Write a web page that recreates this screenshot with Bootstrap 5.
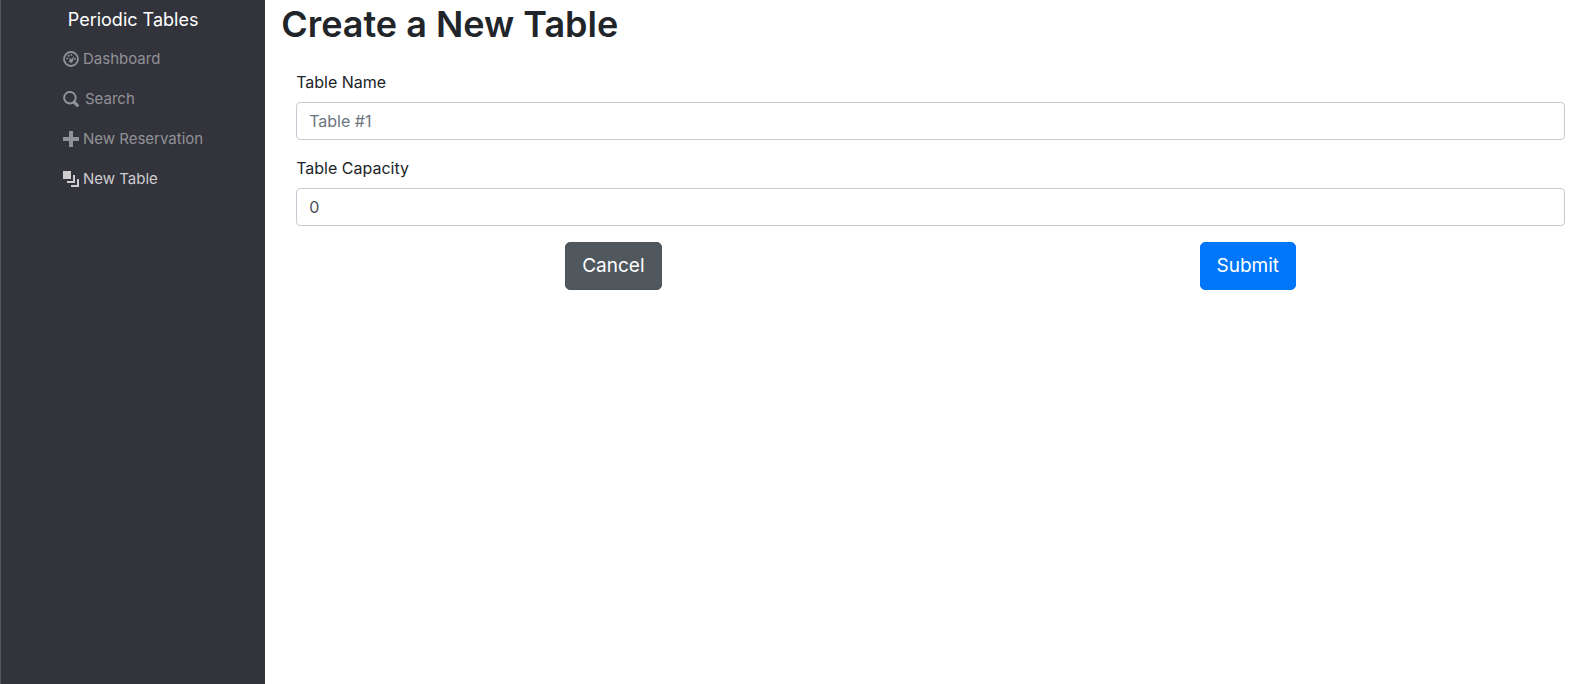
<!DOCTYPE html>
<html lang="en">
<head>
<meta charset="utf-8">
<meta name="viewport" content="width=device-width, initial-scale=1">
<title>Periodic Tables</title>
<link href="https://cdn.jsdelivr.net/npm/bootstrap@5.3.0/dist/css/bootstrap.min.css" rel="stylesheet">
<style>
  body { font-family: Inter, "Liberation Sans", sans-serif; color: #212529; }
  .side { background: #33333c; border-left: 1px solid #55575d; }
  .side .brand-link { font-size: 18px; line-height: 39px; color: #fff; }
  .side .nav-link { display: flex; align-items: center; gap: 4px; padding: 8px 0; font-size: 15px; line-height: 24px; color: #919296; }
  .side .nav-link.active, .side .nav-link:hover { color: #cdcdd0; }
  .side svg { width: 16px; height: 16px; flex: none; }
  .side .nav-link.wide-gap { gap: 6px; }
  .page-title { font-size: 36px; line-height: 48px; font-weight: 600; }
  .table-form { padding: 14px 10px 0 15px; }
  .form-label { line-height: 24px; }
  .form-control { border-color: #c5ccd3; border-radius: 4px; padding: 6px 12px; color: #495057; }
  .form-control::placeholder { color: #6c757d; }
  .btn-lg { --bs-btn-border-radius: 5px; padding: 8px 16px; font-size: 19px; line-height: 30px; }
  .btn-cancel { --bs-btn-bg: #50585e; --bs-btn-border-color: #4c555b; --bs-btn-color: #fff; --bs-btn-hover-bg: #454c52; --bs-btn-hover-color: #fff; }
  .btn-primary { --bs-btn-bg: #0077fa; --bs-btn-border-color: #0077fa; }
</style>
</head>
<body>
<div class="container-fluid p-0">
  <div class="row g-0 min-vh-100">
    <nav class="col-2 side" aria-label="Main">
      <div class="d-flex flex-column align-items-center">
        <a class="brand-link text-decoration-none" href="#">Periodic Tables</a>
        <ul class="nav flex-column">
          <li class="nav-item"><a class="nav-link" href="#">
            <svg viewBox="0 0 16 16" fill="currentColor" aria-hidden="true"><circle cx="8" cy="8" r="7" fill="none" stroke="currentColor" stroke-width="1.8"/><circle cx="4" cy="7.6" r=".9"/><circle cx="5.6" cy="4.8" r="1"/><circle cx="8.4" cy="3.9" r=".9"/><circle cx="12.1" cy="8" r=".9"/><path d="M11.4 4.4 9.9 10a1.9 1.9 0 1 1-2.6-1.8L4.6 6l4 2z"/></svg>
            Dashboard</a></li>
          <li class="nav-item"><a class="nav-link wide-gap" href="#">
            <svg viewBox="0 0 16 16" fill="none" stroke="currentColor" aria-hidden="true"><circle cx="6.9" cy="6.7" r="5.8" stroke-width="2"/><path d="m11.4 11.4 2.9 2.9" stroke-width="3.2" stroke-linecap="round"/></svg>
            Search</a></li>
          <li class="nav-item"><a class="nav-link" href="#">
            <svg viewBox="0 0 16 16" fill="currentColor" aria-hidden="true"><path d="M6 0h4v6h6v4h-6v6H6v-6H0V6h6z"/></svg>
            New Reservation</a></li>
          <li class="nav-item"><a class="nav-link active" aria-current="page" href="#">
            <svg viewBox="0 0 16 16" fill="currentColor" aria-hidden="true"><path d="M0 0h8v8H0zM10 4h2v8H4v-2h6zM14 8h2v8H8v-2h6z"/></svg>
            New Table</a></li>
        </ul>
      </div>
    </nav>
    <main class="col-10 px-3">
      <h1 class="page-title">Create a New Table</h1>
      <form class="table-form">
        <div class="mb-3">
          <label class="form-label" for="table_name">Table Name</label>
          <input class="form-control" id="table_name" type="text" placeholder="Table #1">
        </div>
        <div class="mb-3">
          <label class="form-label" for="capacity">Table Capacity</label>
          <input class="form-control" id="capacity" type="number" value="0">
        </div>
        <div class="row g-0">
          <div class="col-6 text-center"><button class="btn btn-lg btn-cancel" type="button">Cancel</button></div>
          <div class="col-6 text-center"><button class="btn btn-lg btn-primary" type="submit">Submit</button></div>
        </div>
      </form>
    </main>
  </div>
</div>
<script src="https://cdn.jsdelivr.net/npm/bootstrap@5.3.0/dist/js/bootstrap.bundle.min.js"></script>
</body>
</html>
